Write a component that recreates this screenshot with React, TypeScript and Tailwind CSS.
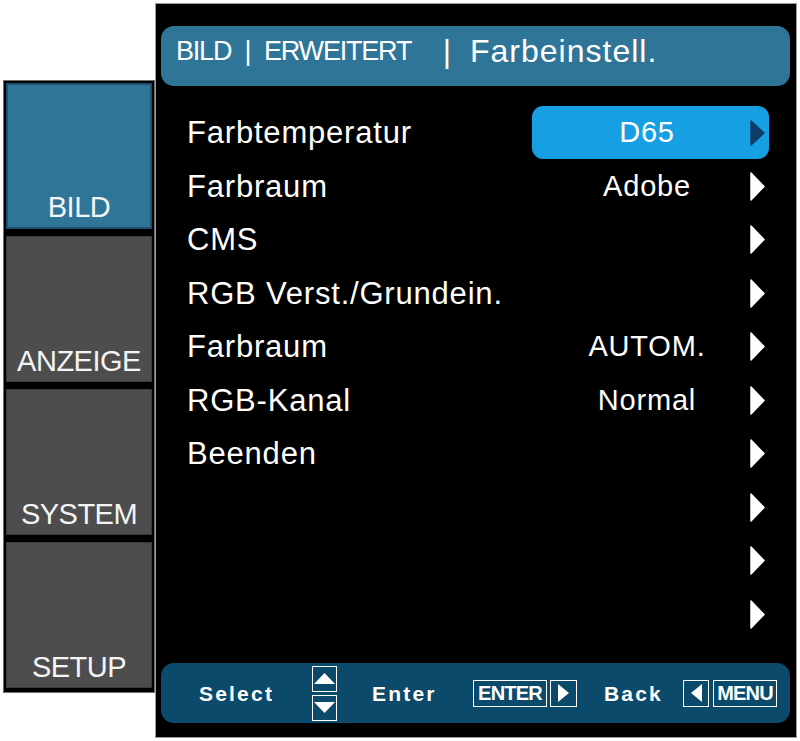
import React from "react";

const FONT = "font-['Liberation_Sans',Arial,sans-serif]";

type Row = { label?: string; value?: string; selected?: boolean };

const ROWS: Row[] = [
  { label: "Farbtemperatur", value: "D65", selected: true },
  { label: "Farbraum", value: "Adobe" },
  { label: "CMS" },
  { label: "RGB Verst./Grundein." },
  { label: "Farbraum", value: "AUTOM." },
  { label: "RGB-Kanal", value: "Normal" },
  { label: "Beenden" },
  {},
  {},
  {},
];

const TABS = [
  { name: "BILD", active: true },
  { name: "ANZEIGE" },
  { name: "SYSTEM" },
  { name: "SETUP" },
];

function RightArrow({ dark }: { dark?: boolean }) {
  if (dark) {
    return (
      <svg width="15" height="26" viewBox="0 0 15 26" className="shrink-0">
        <polygon points="1,1 14,13 1,25" fill="#0e3c66" stroke="#0e3c66" strokeWidth="1.5" strokeLinejoin="round" />
      </svg>
    );
  }
  return (
    <svg width="15" height="29" viewBox="0 0 15 29" className="shrink-0">
      <polygon points="1,1 14,14.5 1,28" fill="#ffffff" stroke="#ffffff" strokeWidth="1.5" strokeLinejoin="round" />
    </svg>
  );
}

function SideTab({ name, active }: { name: string; active?: boolean }) {
  return (
    <div
      className={
        active
          ? "h-[146px] flex items-end justify-center pb-[5px] bg-[#2f7598] border-2 border-[#1d4f70]"
          : "h-[146px] flex items-end justify-center pb-[5px] bg-[#4d4d4d] border border-[#3b3b3b]"
      }
    >
      <span className="text-[29px] leading-none tracking-[-0.5px] text-[#f4f4f4]">{name}</span>
    </div>
  );
}

function KeyBox({ children, w }: { children: React.ReactNode; w: string }) {
  return (
    <div className={`${w} h-[27px] border border-white flex items-center justify-center`}>{children}</div>
  );
}

export default function App() {
  return (
    <div className={`w-[800px] h-[741px] bg-white flex pt-[3px] pl-[3px] ${FONT}`}>
      {/* left tab column */}
      <div className="w-[152px] h-[613px] mt-[77px] border border-[#707070] bg-black p-[2px] pb-[4px] flex flex-col gap-[7px]">
        {TABS.map((t) => (
          <SideTab key={t.name} name={t.name} active={t.active} />
        ))}
      </div>

      {/* main menu panel */}
      <div className="w-[642px] h-[735px] border border-[#9a9a9a] bg-black flex flex-col">
        <div className="mt-[22px] ml-[5px] mr-[6px] h-[60px] rounded-[13px] bg-[#2f7598] flex items-start pl-[15px] text-white">
          <span className="w-[60px] mt-[12px] text-[27px] leading-none tracking-[-1.2px]">BILD</span>
          <span className="w-[24px] mt-[12px] text-[27px] leading-none text-center">|</span>
          <span className="w-[171px] ml-[4px] mt-[12px] text-[27px] leading-none tracking-[-1.2px]">ERWEITERT</span>
          <span className="w-[24px] mt-[9px] text-[32px] leading-none text-center">|</span>
          <span className="ml-[11px] mt-[9px] text-[32px] leading-none tracking-[1px]">Farbeinstell.</span>
        </div>

        <div className="mt-[20px] ml-[5px] mr-[6px] pl-[26px] pr-[21px] flex flex-col">
          {ROWS.map((r, i) => (
            <div key={i} className="h-[53.5px] flex items-center">
              <span className="flex-1 text-[31px] leading-none tracking-[0.8px] text-white">{r.label ?? ""}</span>
              <div
                className={
                  r.selected
                    ? "w-[237px] h-[53px] rounded-[11px] bg-[#169fe2] flex items-center"
                    : "w-[237px] h-[53px] flex items-center"
                }
              >
                <span className="w-[218px] pl-[12px] text-center text-[29px] leading-none tracking-[0.8px] text-white">
                  {r.value ?? ""}
                </span>
                <RightArrow dark={r.selected} />
              </div>
            </div>
          ))}
        </div>

        <div className="mt-auto mb-[14px] ml-[5px] mr-[6px] h-[60px] rounded-[13px] bg-[#0c4a6b] flex items-center pl-[38px] text-white">
          <span className="w-[113px] text-[21px] font-bold tracking-[2.2px] leading-none">Select</span>
          <div className="w-[25px] flex flex-col gap-[3px]">
            <div className="h-[26px] border border-white flex items-center justify-center">
              <svg width="21" height="11" viewBox="0 0 21 11">
                <polygon points="0,11 10.5,0 21,11" fill="#ffffff" />
              </svg>
            </div>
            <div className="h-[26px] border border-white flex items-center justify-center">
              <svg width="21" height="11" viewBox="0 0 21 11">
                <polygon points="0,0 21,0 10.5,11" fill="#ffffff" />
              </svg>
            </div>
          </div>
          <span className="w-[101px] ml-[35px] text-[21px] font-bold tracking-[2.2px] leading-none">Enter</span>
          <KeyBox w="w-[74px]">
            <span className="text-[20px] font-bold leading-none tracking-[-0.8px]">ENTER</span>
          </KeyBox>
          <div className="ml-[3px]">
            <KeyBox w="w-[27px]">
              <svg width="11" height="18" viewBox="0 0 11 18">
                <polygon points="0,0 11,9 0,18" fill="#ffffff" />
              </svg>
            </KeyBox>
          </div>
          <span className="w-[79px] ml-[27px] text-[21px] font-bold tracking-[2.2px] leading-none">Back</span>
          <KeyBox w="w-[26px]">
            <svg width="11" height="18" viewBox="0 0 11 18">
              <polygon points="11,0 0,9 11,18" fill="#ffffff" />
            </svg>
          </KeyBox>
          <div className="ml-[4px]">
            <KeyBox w="w-[64px]">
              <span className="text-[20px] font-bold leading-none tracking-[-0.8px]">MENU</span>
            </KeyBox>
          </div>
        </div>
      </div>
    </div>
  );
}
